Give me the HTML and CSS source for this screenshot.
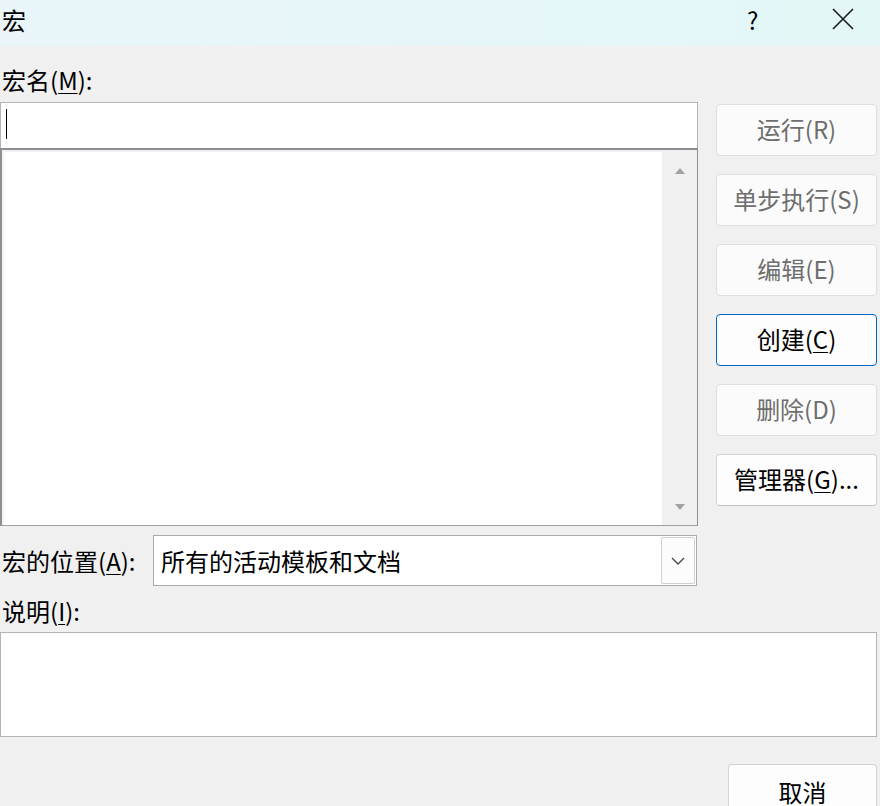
FILE: index.html
```html
<!DOCTYPE html>
<html lang="zh-CN">
<head>
    <meta charset="UTF-8">
    <title>宏</title>
    <link rel="stylesheet" href="styles.css">
</head>
<body>

<!-- Заголовок окна -->
<div class="titlebar">
    <span class="title">宏</span>
    <span class="help">?</span>
    <span class="close">
        <svg width="22" height="22" viewBox="0 0 22 22"><path d="M1 1 L21 21 M21 1 L1 21" stroke="#1a1a1a" stroke-width="1.6" fill="none"/></svg>
    </span>
</div>

<div class="dialog">
    <div class="main">
        <div class="left">
            <div class="label">宏名(<u>M</u>):</div>
            <div class="name-input"><span class="caret"></span></div>
            <div class="macro-list">
                <div class="list-body"></div>
                <div class="scrollbar">
                    <span class="arrow up"></span>
                    <span class="arrow down"></span>
                </div>
            </div>
        </div>

        <div class="side">
            <button class="btn disabled">运行(R)</button>
            <button class="btn disabled">单步执行(S)</button>
            <button class="btn disabled">编辑(E)</button>
            <button class="btn default">创建(<u>C</u>)</button>
            <button class="btn disabled">删除(D)</button>
            <button class="btn">管理器(<u>G</u>)...</button>
        </div>
    </div>

    <div class="location">
        <span class="label">宏的位置(<u>A</u>):</span>
        <div class="select">
            <span class="select-text">所有的活动模板和文档</span>
            <span class="select-btn">
                <svg width="14" height="8" viewBox="0 0 14 8"><path d="M1 1 L7 7 L13 1" stroke="#444" stroke-width="1.3" fill="none"/></svg>
            </span>
        </div>
    </div>

    <div class="label desc-label">说明(<u>I</u>):</div>
    <div class="description"></div>

    <div class="footer">
        <button class="btn cancel">取消</button>
    </div>
</div>

</body>
</html>
```

FILE: styles.css
```css
/* Основные стили */
body {
    margin: 0;
    width: 880px;
    height: 806px;
    overflow: hidden;
    background-color: #f0f0f0;
    font-family: "Noto Sans CJK SC", "Noto Sans", sans-serif;
    font-size: 24px;
    color: #000;
}

u {
    text-decoration-thickness: 1px;
    text-underline-offset: 3px;
}

/* Заголовок окна */
.titlebar {
    height: 46px;
    display: flex;
    align-items: center;
    background: linear-gradient(to right, #e9f5f9, #e3f7f7);
}
.title {
    margin-left: 2px;
    margin-top: -6px;
    line-height: 32px;
}
.help {
    margin-left: auto;
    margin-top: -6px;
    width: 16px;
    line-height: 32px;
}
.close {
    display: flex;
    margin-left: 69px;
    margin-right: 26px;
    margin-top: -8px;
}

.dialog {
    padding: 0 3px 0 0;
}
.main {
    display: flex;
}
.left {
    width: 698px;
}
.side {
    width: 161px;
    margin-left: 18px;
    padding-top: 58px;
    display: flex;
    flex-direction: column;
    gap: 18px;
}

.label {
    line-height: 32px;
    padding-left: 2px;
    white-space: nowrap;
}
.left .label {
    margin-top: 18px;
    margin-bottom: 6px;
}

.name-input {
    height: 45px;
    background-color: #fff;
    border: 1px solid #b4b4b4;
    border-bottom: none;
    position: relative;
}
.caret {
    position: absolute;
    left: 5px;
    top: 6px;
    width: 1px;
    height: 30px;
    background-color: #000;
}

.macro-list {
    height: 375px;
    display: flex;
    border: 2px solid #8c8f94;
    border-right-width: 1px;
    border-bottom-width: 1px;
    border-bottom-color: #a0a0a0;
}
.list-body {
    flex: 1;
    background-color: #fff;
    border-top: 2px solid #f0f0f0;
    border-left: 2px solid #f4f4f4;
}
.scrollbar {
    width: 35px;
    background-color: #f0f0f0;
    display: flex;
    flex-direction: column;
    align-items: center;
    justify-content: space-between;
    padding: 18px 0 15px;
}
.arrow {
    width: 0;
    height: 0;
    border-left: 5px solid transparent;
    border-right: 5px solid transparent;
}
.arrow.up {
    border-bottom: 6px solid #a3a3a3;
}
.arrow.down {
    border-top: 6px solid #a3a3a3;
}

/* Кнопки */
.btn {
    height: 52px;
    padding: 0 0 3px;
    font-family: inherit;
    font-size: 24px;
    color: #000;
    background-color: #fdfdfd;
    border: 1px solid #d3d3d3;
    border-bottom-color: #c2c2c2;
    border-radius: 4px;
}
.btn.disabled {
    color: #6e6e6e;
    border-color: #dedede;
    background-color: #fbfbfb;
}
.btn.default {
    border-color: #0067c0;
}

/* Расположение макроса */
.location {
    display: flex;
    align-items: center;
    margin-top: 9px;
}
.location .label {
    width: 151px;
}
.select {
    width: 542px;
    height: 49px;
    display: flex;
    align-items: center;
    background-color: #fff;
    border: 1px solid #a9a9ad;
}
.select-text {
    flex: 1;
    padding-left: 7px;
}
.select-btn {
    width: 32px;
    height: 45px;
    margin-right: 1px;
    display: flex;
    align-items: center;
    justify-content: center;
    background-color: #fcfcfc;
    border: 1px solid #d0d0d0;
    border-radius: 2px;
}

.desc-label {
    margin-top: 9px;
    margin-bottom: 5px;
}
.description {
    height: 103px;
    background-color: #fff;
    border: 1px solid #b4b4b4;
}

.footer {
    display: flex;
    justify-content: flex-end;
    margin-top: 27px;
}
.btn.cancel {
    width: 149px;
    height: 56px;
    padding-top: 2px;
}
```
